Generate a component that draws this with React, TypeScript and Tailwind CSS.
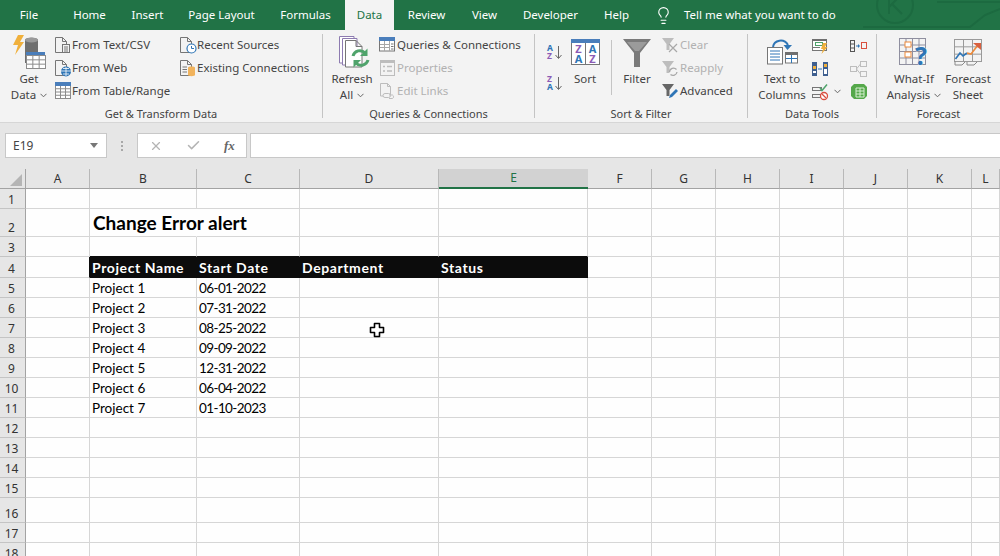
import { Check, Lightbulb, X } from "lucide-react";
import type { ReactNode } from "react";

const LINE = "#767676";
const BLUE = "#2e75b6";
const HEAD = "#4a7ebb";
const PURPLE = "#8c5bb5";
const ORANGE = "#ed8a3a";
const GREEN = "#4fa36b";
const OFF = "#bdbdbd";

function Ico({ w, h, children }: { w: number; h: number; children: ReactNode }) {
  return (
    <svg width={w} height={h} viewBox={`0 0 ${w} ${h}`} fill="none" className="shrink-0 overflow-visible">
      {children}
    </svg>
  );
}

function Page({ c = LINE }: { c?: string }) {
  return <path d="M1.5 1.5H8.5L12.5 5.5V16.5H1.5ZM8.5 1.5V5.5H12.5" stroke={c} />;
}

function Grid({ x, y, w, h, cols, rows, c = "#a6a6a6" }: { x: number; y: number; w: number; h: number; cols: number; rows: number; c?: string }) {
  const cw = w / cols;
  const rh = h / rows;
  return (
    <g stroke={c}>
      <rect x={x + 0.5} y={y + 0.5} width={w} height={h} />
      {Array.from({ length: cols - 1 }, (_, i) => (
        <path key={i} d={`M${x + 0.5 + cw * (i + 1)} ${y}V${y + h}`} />
      ))}
      {Array.from({ length: rows - 1 }, (_, i) => (
        <path key={i} d={`M${x} ${y + 0.5 + rh * (i + 1)}H${x + w}`} />
      ))}
    </g>
  );
}

function GetDataIcon() {
  return (
    <Ico w={35} h={35}>
      <path d="M6 0H12L8 7H12L3 20L6 10H1Z" fill="#f0b03c" />
      <path d="M13 5C13 2 26 2 26 5V28H13Z" fill="#6f6f6f" />
      <ellipse cx="19.5" cy="5" rx="6.5" ry="2.5" fill="#9a9a9a" />
      <rect x="14" y="17" width="19" height="16" fill="#fff" />
      <rect x="14" y="17" width="19" height="4" fill={HEAD} />
      <Grid x={14} y={20} w={19} h={13} cols={3} rows={3} c="#8c8c8c" />
    </Ico>
  );
}

function TextCsvIcon() {
  return (
    <Ico w={18} h={18}>
      <Page />
      <rect x="8.5" y="8.5" width="7" height="8" fill="#f3f3f3" stroke={LINE} />
      <path d="M10 11H14M10 13H14M10 15H14" stroke={LINE} />
    </Ico>
  );
}

function WebIcon() {
  return (
    <Ico w={18} h={18}>
      <Page />
      <circle cx="12" cy="12.5" r="5" fill={BLUE} />
      <path d="M7 12H17M12 8V17M9 9.5H15M9 15H15" stroke="#fff" strokeWidth="0.8" />
    </Ico>
  );
}

function TableIcon() {
  return (
    <Ico w={18} h={17}>
      <rect x="1" y="1" width="16" height="15" fill="#fff" />
      <Grid x={1} y={3} w={15} h={13} cols={3} rows={4} c="#8c8c8c" />
      <rect x="1" y="0" width="16" height="4" fill={HEAD} />
    </Ico>
  );
}

function RecentIcon() {
  return (
    <Ico w={18} h={18}>
      <Page />
      <circle cx="12.5" cy="12.5" r="4.5" fill="#fff" stroke={BLUE} strokeWidth="1.2" />
      <path d="M12.5 10V12.5H15" stroke={BLUE} />
    </Ico>
  );
}

function ExistingIcon() {
  return (
    <Ico w={18} h={18}>
      <Page />
      <path d="M3.5 8H8M3.5 10.5H8M3.5 13H8" stroke={LINE} />
      <path d="M9 8.5C9 7 16 7 16 8.5V16C16 17.5 9 17.5 9 16Z" fill="#f1b35c" />
    </Ico>
  );
}

function RefreshIcon() {
  return (
    <Ico w={36} h={35}>
      <g transform="translate(4 0)">
        <g stroke="#8d7bb0" fill="#fff">
          <path d="M1.5 1.5H16V28H1.5Z" />
          <path d="M4.5 3.5H19V30H4.5Z" />
        </g>
        <path d="M7.5 5.5H18L24 11.5V32H7.5ZM18 5.5V11.5H24" stroke={LINE} fill="#fff" />
        <path d="M15 21A7 7 0 0 1 27 18" stroke={GREEN} strokeWidth="3" />
        <path d="M29.5 13.5V21H22Z" fill={GREEN} />
        <path d="M30 25A7 7 0 0 1 18 28" stroke={GREEN} strokeWidth="3" />
        <path d="M15.5 32.5V25H23Z" fill={GREEN} />
      </g>
    </Ico>
  );
}

function QueriesIcon() {
  return (
    <Ico w={16} h={15}>
      <rect x="0.5" y="0.5" width="15" height="13.5" fill="#fff" stroke={LINE} />
      <rect x="0" y="0" width="16" height="4" fill={HEAD} />
      <path d="M10.5 4V14M1 7.5H10M1 10.5H10M5.5 4V14" stroke="#a6a6a6" />
      <path d="M12 7H14.5M12 9.5H14.5M12 12H14.5" stroke={LINE} />
    </Ico>
  );
}

function PropertiesIcon() {
  return (
    <Ico w={15} h={16}>
      <rect x="0.5" y="0.5" width="14" height="15" stroke={OFF} />
      <rect x="0" y="0" width="15" height="3" fill={OFF} />
      <path d="M3 6.5H5M3 11H5M7 6.5H12M7 11H12" stroke={OFF} strokeWidth="1.5" />
    </Ico>
  );
}

function EditLinksIcon() {
  return (
    <Ico w={16} h={17}>
      <path d="M1.5 1.5H8.5L11.5 4.5V14H1.5ZM8.5 1.5V4.5H11.5" stroke={OFF} />
      <path d="M6 11.5H9.5A2 2 0 0 1 9.5 15.5H6A2 2 0 0 1 6 11.5ZM10 13H13.5A2 2 0 0 1 13.5 16.5H10" stroke={OFF} fill="#f3f3f3" />
    </Ico>
  );
}

function AzIcon({ flip }: { flip?: boolean }) {
  const top = flip ? "Z" : "A";
  const bottom = flip ? "A" : "Z";
  return (
    <Ico w={16} h={16}>
      <text x="0" y="7" fontSize="8.5" fontWeight="700" fill={flip ? PURPLE : BLUE} fontFamily="Noto Sans, sans-serif">{top}</text>
      <text x="0" y="15" fontSize="8.5" fontWeight="700" fill={flip ? BLUE : PURPLE} fontFamily="Noto Sans, sans-serif">{bottom}</text>
      <path d="M11.5 2V14M8.5 11L11.5 14.5L14.5 11" stroke="#666" />
    </Ico>
  );
}

function SortIcon() {
  const t = { fontSize: 11, fontWeight: 700, fontFamily: "Noto Sans, sans-serif", textAnchor: "middle" as const };
  return (
    <Ico w={29} h={28}>
      <rect x="0.5" y="0.5" width="28" height="25" fill="#fff" stroke={LINE} />
      <rect x="0" y="0" width="29" height="4" fill={HEAD} />
      <path d="M14.5 4V26" stroke={LINE} />
      <text x="7.5" y="14" fill={PURPLE} {...t}>Z</text>
      <text x="7.5" y="24" fill={BLUE} {...t}>A</text>
      <text x="21.5" y="14" fill={BLUE} {...t}>A</text>
      <text x="21.5" y="24" fill={PURPLE} {...t}>Z</text>
    </Ico>
  );
}

function FilterIcon() {
  return (
    <Ico w={28} h={28}>
      <path d="M0 0H28L17 14V28H11V14Z" fill="#7a7a7a" />
      <path d="M4 3H24L16 12H12Z" fill="#9b9b9b" />
    </Ico>
  );
}

function SmallFunnel({ c }: { c: string }) {
  return <path d="M0 1H12L7.5 7V13H4.5V7Z" fill={c} />;
}

function ClearIcon() {
  return (
    <Ico w={17} h={16}>
      <SmallFunnel c={OFF} />
      <path d="M7 7L15 15M15 7L7 15" stroke="#a8a8a8" strokeWidth="1.2" />
    </Ico>
  );
}

function ReapplyIcon() {
  return (
    <Ico w={17} h={16}>
      <SmallFunnel c={OFF} />
      <path d="M7.5 12A4 4 0 0 1 14.5 9.5M15 12A4 4 0 0 1 8.5 14.5" stroke="#a8a8a8" strokeWidth="1.3" />
    </Ico>
  );
}

function AdvancedIcon() {
  return (
    <Ico w={17} h={16}>
      <SmallFunnel c="#666" />
      <path d="M7 15L8 12L14 6L16 8L10 14Z" fill={BLUE} />
    </Ico>
  );
}

function TextColumnsIcon() {
  return (
    <Ico w={31} h={29}>
      <path d="M6 9C7 2 17 0 21 7" stroke={BLUE} strokeWidth="2" />
      <path d="M16.5 7H25L20.5 12Z" fill={BLUE} />
      <rect x="0.5" y="9.5" width="15" height="16.5" fill="#fff" stroke={LINE} />
      <path d="M3 13H13M3 16H13M3 19H13M3 22H13" stroke={BLUE} />
      <rect x="18.5" y="14.5" width="12" height="10.5" fill="#fff" stroke={LINE} />
      <rect x="18" y="14" width="13" height="3" fill="#6f6f6f" />
      <path d="M24.5 17V25M19 20.5H30" stroke={BLUE} />
    </Ico>
  );
}

function FlashIcon() {
  return (
    <Ico w={16} h={16}>
      <rect x="0.5" y="1.5" width="14" height="11" fill="#fff" stroke={LINE} />
      <rect x="0" y="1" width="15" height="2" fill="#6f6f6f" />
      <rect x="3.5" y="4.5" width="7" height="3" stroke={GREEN} />
      <path d="M1 9.5H8" stroke={LINE} />
      <path d="M11 5H15L13 9H15.5L9.5 16L11 11H9Z" fill="#f0b03c" />
    </Ico>
  );
}

function DuplicatesIcon() {
  return (
    <Ico w={16} h={16}>
      <rect x="0" y="1" width="5" height="14" fill="#3f5f8f" />
      <rect x="1" y="5" width="3" height="3" fill="#f0b03c" />
      <rect x="1" y="10" width="3" height="2" fill="#fff" />
      <rect x="11" y="1" width="5" height="14" fill="#3f5f8f" />
      <rect x="12" y="3" width="3" height="3" fill="#f0b03c" />
      <rect x="12" y="8" width="3" height="5" fill="#fff" />
      <path d="M6 8H10" stroke={BLUE} />
    </Ico>
  );
}

function ValidationIcon() {
  return (
    <Ico w={16} h={16}>
      <rect x="0.5" y="3.5" width="9" height="3" stroke={LINE} />
      <rect x="0.5" y="10.5" width="9" height="3" stroke={LINE} />
      <path d="M8 4L10 6.5L15 0.5" stroke={GREEN} strokeWidth="1.5" />
      <circle cx="12" cy="12" r="3.5" fill="#fff" stroke="#d9503f" strokeWidth="1.3" />
      <path d="M10 10L14 14" stroke="#d9503f" strokeWidth="1.2" />
    </Ico>
  );
}

function ConsolidateIcon() {
  return (
    <Ico w={17} h={12}>
      <rect x="0.5" y="0.5" width="4" height="11" stroke="#555" />
      <path d="M0 4H5M0 8H5" stroke="#555" />
      <path d="M6 6H9" stroke={BLUE} />
      <path d="M8 4L10 6L8 8Z" fill={BLUE} />
      <rect x="11.5" y="2.5" width="5" height="6" stroke="#d9503f" />
    </Ico>
  );
}

function RelationshipsIcon() {
  return (
    <Ico w={17} h={16}>
      <rect x="0.5" y="5.5" width="6" height="5" stroke={OFF} />
      <rect x="10.5" y="0.5" width="6" height="5" stroke={OFF} />
      <rect x="10.5" y="10.5" width="6" height="5" stroke={OFF} />
      <path d="M6.5 8L10.5 3M6.5 8L10.5 13" stroke={OFF} />
    </Ico>
  );
}

function ModelIcon() {
  return (
    <Ico w={16} h={17}>
      <path d="M3 1H13L16 4V13L13 16H3L0 13V4Z" fill="#55a84a" />
      <path d="M5 5H13V14H5ZM9 5V14M5 8H13M5 11H13" stroke="#d8efd2" />
    </Ico>
  );
}

function WhatIfIcon() {
  return (
    <Ico w={30} h={29}>
      <Grid x={0} y={0} w={26} h={26} cols={4} rows={4} c="#8f8f9f" />
      <rect x="6" y="4" width="6" height="5" fill="#fff" stroke={ORANGE} />
      <rect x="6" y="14" width="6" height="5" fill="#fff" stroke={ORANGE} />
      <text x="22" y="27" textAnchor="middle" fontSize="25" fontWeight="700" fill={BLUE} fontFamily="Noto Sans, sans-serif" stroke="#f3f3f3" strokeWidth="0.6" paintOrder="stroke">?</text>
    </Ico>
  );
}

function ForecastIcon() {
  return (
    <Ico w={28} h={28}>
      <Grid x={0} y={0} w={27} h={22} cols={3} rows={3} c="#9a9a9a" />
      <path d="M1.5 20L6 14L9 17L13 14" stroke={BLUE} strokeWidth="1.6" />
      <path d="M13 14L17 15L24 6" stroke={ORANGE} strokeWidth="1.6" />
      <path d="M19 4H27V11Z" fill="#d9603f" />
      <path d="M1 22V26H8L11 23M13 23V26H20L23 23" stroke="#8a8a8a" />
    </Ico>
  );
}

function Chev() {
  return (
    <svg width="7" height="5" viewBox="0 0 7 5" fill="none" className="inline-block shrink-0">
      <path d="M0.5 0.8L3.5 3.8L6.5 0.8" stroke="#666" />
    </svg>
  );
}

function Big({ icon, lines, chevron, className }: { icon: ReactNode; lines: string[]; chevron?: boolean; className: string }) {
  return (
    <div className={`flex flex-col items-center ${className}`}>
      <div className="flex h-[37px] w-full items-center justify-center">{icon}</div>
      {lines.map((l, i) => (
        <div key={l} className="flex h-4 items-center gap-[4px] leading-4 whitespace-nowrap">
          {l}
          {chevron && i === lines.length - 1 && <Chev />}
        </div>
      ))}
    </div>
  );
}

function Small({ icon, label, off, iconBox }: { icon: ReactNode; label: string; off?: boolean; iconBox: string }) {
  return (
    <div className={`flex h-[23px] items-center whitespace-nowrap ${off ? "text-[#b1b1b1]" : ""}`}>
      <div className={`flex items-center justify-center ${iconBox}`}>{icon}</div>
      {label}
    </div>
  );
}

function Group({ label, className, children }: { label: string; className: string; children: ReactNode }) {
  return (
    <div className={`flex h-[88px] shrink-0 flex-col ${className}`}>
      <div className="flex h-[72px]">{children}</div>
      <div className="h-4 text-center text-[11px] leading-4 whitespace-nowrap">{label}</div>
    </div>
  );
}

const Sep = () => <div className="h-[84px] w-px shrink-0 bg-[#c4c4c4]" />;

const TABS = [
  { name: "File", w: "w-[58px]" },
  { name: "Home", w: "w-[63px]" },
  { name: "Insert", w: "w-[53px]" },
  { name: "Page Layout", w: "w-[95px]" },
  { name: "Formulas", w: "mr-[3px] w-[73px]" },
  { name: "Data", w: "w-[49px]", active: true },
  { name: "Review", w: "w-[65px]" },
  { name: "View", w: "w-[51px]" },
  { name: "Developer", w: "w-[81px]" },
  { name: "Help", w: "w-[51px]" },
];

function TitleBar() {
  return (
    <div className="relative flex h-[30px] bg-[#217346] text-white">
      {TABS.map((t) => (
        <div
          key={t.name}
          className={`flex items-center justify-center ${t.w} ${t.active ? "bg-[#f3f3f3] text-[#217346]" : ""}`}
        >
          {t.name}
        </div>
      ))}
      <div className="ml-[12px] flex items-center">
        <Lightbulb size={19} strokeWidth={1.4} />
        <span className="ml-[11px]">Tell me what you want to do</span>
      </div>
      {/* faint circuit pattern in the title bar */}
      <svg className="absolute top-0 right-0" width="160" height="30" viewBox="0 0 160 30" fill="none" stroke="#1c6a40" strokeWidth="2">
        <circle cx="55" cy="5" r="18" />
        <path d="M49 -4V14M49 7L59 -3M52 4L62 14" />
        <path d="M23 27H130L145 15L160 9" />
        <path d="M97 2H160" />
      </svg>
    </div>
  );
}

function Ribbon() {
  return (
    <div className="flex h-[92px] bg-[#f3f3f3] pt-[4px] text-[#444]">
      <Group label="Get & Transform Data" className="w-[322px]">
        <Big className="ml-[5px] w-[48px]" icon={<GetDataIcon />} lines={["Get", "Data"]} chevron />
        <div className="-mt-px w-[125px]">
          <Small iconBox="w-[19px]" icon={<TextCsvIcon />} label="From Text/CSV" />
          <Small iconBox="w-[19px]" icon={<WebIcon />} label="From Web" />
          <Small iconBox="w-[19px]" icon={<TableIcon />} label="From Table/Range" />
        </div>
        <div className="-mt-px">
          <Small iconBox="w-[19px]" icon={<RecentIcon />} label="Recent Sources" />
          <Small iconBox="w-[19px]" icon={<ExistingIcon />} label="Existing Connections" />
        </div>
      </Group>
      <Sep />
      <Group label="Queries & Connections" className="w-[211px]">
        <Big className="ml-[9px] w-[40px]" icon={<RefreshIcon />} lines={["Refresh", "All"]} chevron />
        <div className="-mt-px ml-[5px]">
          <Small iconBox="w-[20px]" icon={<QueriesIcon />} label="Queries & Connections" />
          <Small iconBox="w-[20px]" icon={<PropertiesIcon />} label="Properties" off />
          <Small iconBox="w-[20px]" icon={<EditLinksIcon />} label="Edit Links" off />
        </div>
      </Group>
      <Sep />
      <Group label="Sort & Filter" className="w-[212px]">
        <div className="ml-[12px] flex w-4 flex-col gap-[15px] pt-[10px]">
          <AzIcon />
          <AzIcon flip />
        </div>
        <Big className="ml-[4px] w-[36px]" icon={<SortIcon />} lines={["Sort"]} />
        <div className="mt-[6px] ml-[8px] h-[55px] w-px bg-[#c4c4c4]" />
        <Big className="ml-[8px] w-[34px]" icon={<FilterIcon />} lines={["Filter"]} />
        <div className="-mt-px ml-[7px]">
          <Small iconBox="w-[19px]" icon={<ClearIcon />} label="Clear" off />
          <Small iconBox="w-[19px]" icon={<ReapplyIcon />} label="Reapply" off />
          <Small iconBox="w-[19px]" icon={<AdvancedIcon />} label="Advanced" />
        </div>
      </Group>
      <Sep />
      <Group label="Data Tools" className="w-[128px]">
        <Big className="ml-[10px] w-[48px]" icon={<TextColumnsIcon />} lines={["Text to", "Columns"]} />
        <div className="ml-[6px] w-[38px]">
          <Small iconBox="w-[16px]" icon={<FlashIcon />} label="" />
          <Small iconBox="w-[16px]" icon={<DuplicatesIcon />} label="" />
          <div className="flex h-[23px] items-center gap-[6px]">
            <ValidationIcon />
            <Chev />
          </div>
        </div>
        <div>
          <Small iconBox="w-[17px]" icon={<ConsolidateIcon />} label="" />
          <Small iconBox="w-[17px]" icon={<RelationshipsIcon />} label="" />
          <Small iconBox="w-[17px]" icon={<ModelIcon />} label="" />
        </div>
      </Group>
      <Sep />
      <Group label="Forecast" className="w-[123px]">
        <Big className="ml-[10px] w-[54px]" icon={<WhatIfIcon />} lines={["What-If", "Analysis"]} chevron />
        <Big className="ml-[5px] w-[44px]" icon={<ForecastIcon />} lines={["Forecast", "Sheet"]} />
      </Group>
    </div>
  );
}

function FormulaBar() {
  return (
    <div className="flex h-[47px] items-start border-t border-[#d6d6d6] bg-[#e6e6e6] pt-[10px] text-[#444]">
      <div className="ml-[5px] flex h-[25px] w-[102px] items-center justify-between border border-[#c8c8c8] bg-white pr-[8px] pl-[7px] text-[12px]">
        <span>E19</span>
        <span className="h-0 w-0 border-x-[4px] border-t-[5px] border-x-transparent border-t-[#777]" />
      </div>
      <div className="ml-[14px] flex h-[25px] flex-col justify-center gap-[2px]">
        <span className="h-[2px] w-[2px] bg-[#a8a8a8]" />
        <span className="h-[2px] w-[2px] bg-[#a8a8a8]" />
        <span className="h-[2px] w-[2px] bg-[#a8a8a8]" />
      </div>
      <div className="ml-[14px] flex h-[25px] w-[110px] items-center border border-[#c8c8c8] bg-white">
        <X size={14} strokeWidth={2} className="ml-[11px] text-[#b4b4b4]" />
        <Check size={15} strokeWidth={2.4} className="ml-[23px] text-[#b4b4b4]" />
        <span className="ml-[23px] font-['Liberation_Serif',serif] text-[13px] font-bold text-[#666] italic">fx</span>
      </div>
      <div className="ml-[3px] h-[25px] flex-1 border border-r-0 border-[#c8c8c8] bg-white" />
    </div>
  );
}

const COLS = ["A", "B", "C", "D", "E", "F", "G", "H", "I", "J", "K", "L"];
const ROW_H = [
  "h-[20px]", "h-[28px]", "h-[20px]", "h-[21px]", "h-[20px]", "h-[20px]", "h-[20px]", "h-[20px]", "h-[20px]",
  "h-[20px]", "h-[20px]", "h-[20px]", "h-[20px]", "h-[20px]", "h-[20px]", "h-[25px]", "h-[20px]", "h-[20px]",
];
const PROJECTS = [
  ["Project 1", "06-01-2022"],
  ["Project 2", "07-31-2022"],
  ["Project 3", "08-25-2022"],
  ["Project 4", "09-09-2022"],
  ["Project 5", "12-31-2022"],
  ["Project 6", "06-04-2022"],
  ["Project 7", "01-10-2023"],
];
const HEADINGS = ["Project Name", "Start Date", "Department", "Status"];

function cellText(row: number, col: number): string {
  if (row === 4 && col >= 1 && col <= 4) return HEADINGS[col - 1];
  if (row >= 5 && row <= 11 && col >= 1 && col <= 2) return PROJECTS[row - 5][col - 1];
  return "";
}

function CursorMark() {
  return (
    <svg className="absolute top-[4px] left-[69px]" width="16" height="16" viewBox="0 0 16 16">
      <path d="M5.5 1.5H10.5V5.5H14.5V10.5H10.5V14.5H5.5V10.5H1.5V5.5H5.5Z" fill="#fff" stroke="#000" strokeWidth="1.6" strokeLinejoin="round" />
    </svg>
  );
}

function Cell({ row, col }: { row: number; col: number }) {
  const inHead = row === 4 && col >= 1 && col <= 4;
  const isTitle = row === 2 && col === 1;
  const isDate = row >= 5 && row <= 11 && col === 2;
  const text = cellText(row, col);
  const bottom = (row === 3 && col >= 1 && col <= 4) || inHead ? "border-b-[#0c0c0c]" : "border-b-[#d6d6d6]";
  const right = isTitle ? "border-r-transparent" : row === 4 && col <= 4 ? "border-r-[#0c0c0c]" : "border-r-[#d6d6d6]";
  return (
    <div
      className={`relative flex items-end border-r border-b pl-[2px] whitespace-nowrap ${bottom} ${right} ${
        inHead ? "bg-[#0c0c0c] text-[14px] font-bold tracking-[0.6px] text-white" : "bg-[#fefefe] text-black"
      } ${isTitle ? "z-10" : ""} ${isDate ? "tracking-[-0.6px]" : ""}`}
    >
      {isTitle && <span className="pb-[1px] pl-[1px] text-[19px] leading-6 font-bold text-black">Change Error alert</span>}
      {text && <span className={inHead ? "leading-[19px]" : "leading-[17px]"}>{text}</span>}
      {row === 7 && col === 3 && <CursorMark />}
    </div>
  );
}

function Sheet() {
  return (
    <div className="grid grid-cols-[26px_64px_107px_103px_139px_149px_64px_64px_64px_64px_64px_64px_28px] font-['Lato',sans-serif] text-[13.5px]">
      <div className="relative h-[20px] border-r border-b border-[#a3a3a3] bg-[#e6e6e6]">
        <span className="absolute right-[3px] bottom-[2px] h-0 w-0 border-b-[12px] border-l-[12px] border-b-[#b5b5b5] border-l-transparent" />
      </div>
      {COLS.map((c) => (
        <div
          key={c}
          className={`flex h-[20px] items-center justify-center font-['Noto_Sans',sans-serif] text-[12px] ${
            c === "E"
              ? "border-b-2 border-b-[#217346] bg-[#d2d2d2] text-[#217346]"
              : "border-r border-b border-r-[#b8b8b8] border-b-[#a3a3a3] bg-[#e6e6e6] text-[#333]"
          }`}
        >
          {c}
        </div>
      ))}
      {ROW_H.map((h, i) => {
        const row = i + 1;
        return (
          <div key={row} className="contents">
            <div
              className={`flex items-end justify-center border-r border-b border-r-[#a3a3a3] border-b-[#c4c4c4] bg-[#e6e6e6] pr-[2px] font-['Noto_Sans',sans-serif] text-[12px] leading-[16px] text-[#333] ${h}`}
            >
              {row}
            </div>
            {COLS.map((_, col) => (
              <Cell key={col} row={row} col={col} />
            ))}
          </div>
        );
      })}
    </div>
  );
}

export default function App() {
  return (
    <div className="h-[556px] w-[1000px] overflow-hidden bg-[#e6e6e6] font-['Noto_Sans',sans-serif] text-[11.5px]">
      <TitleBar />
      <Ribbon />
      <FormulaBar />
      <Sheet />
    </div>
  );
}
